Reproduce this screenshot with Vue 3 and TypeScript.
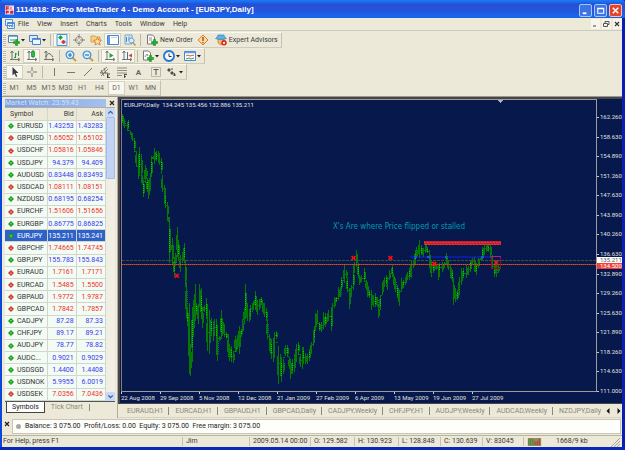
<script setup lang="ts">
interface Shape { d: string; f?: string; s?: string; w?: number }
interface Tool { icon?: string; label: string; text?: string; drop?: boolean; on?: boolean; sep?: boolean }
interface Quote { symbol: string; bid: string; ask: string; up: boolean }

const plus: Shape = { d: 'M7.5 5.5h2v2h2v2h-2v2h-2v-2h-2v-2h2z', f: '#1fae2c', s: '#0a7d18', w: 0.5 }
const axes: Shape = { d: 'M3 1v9M1.500 3L3 1l1.500 2M1 9.500h9M9 8l2 1.500-2 1.500', s: '#666', w: 0.9 }
const sheet: Shape = { d: 'M1.500 1h5l2 2v7h-7z', f: '#fff', s: '#777', w: 1 }

const icons: Record<string, Shape[]> = {
  newchart: [{ d: 'M.5 1.500h9v7h-9z', f: '#fff', s: '#4c86b8', w: 1 }, { d: 'M1 2.500h8', s: '#6cb8e0', w: 1 }, { d: 'M2 6h5', s: '#2c9a48', w: 1 }, plus],
  profiles: [{ d: 'M.5 1.500h8v6h-8z', f: '#d8ecfa', s: '#4a80c8', w: 1 }, { d: 'M3.500 4.500h8v6h-8z', f: '#eef7ff', s: '#4a80c8', w: 1 }, { d: 'M3.500 5.500h8', s: '#5a9be0', w: 1 }],
  market: [{ d: 'M1 .5h10v11h-10z', f: '#eaf6ff', s: '#4a94d8', w: 1 }, { d: 'M4.500 1.500l2 2-2 2-2-2z', f: '#2aa52c', s: '#2aa52c', w: 0.8 }, { d: 'M7.500 6l2 2-2 2-2-2z', f: '#e0352a', s: '#e0352a', w: 0.8 }],
  target: [{ d: 'M6 2.500a3.500 3.500 0 1 0 .01 0M6 0v5M6 7v5M0 6h5M7 6h5', s: '#7d7d76', w: 0.9 }],
  star: [{ d: 'M1 2h4l1 1h4v5h-9z', f: '#f6d48a', s: '#c78b32', w: 0.7 }, { d: 'M7.500 3.500l1.200 2.500 2.800.3-2 1.900.6 2.800-2.600-1.400-2.500 1.400.5-2.800-2-1.900 2.800-.3z', f: '#ffdc9c', s: '#c9772a', w: 0.8 }],
  terminal: [{ d: 'M.5 1.500h11v9h-11z', f: '#fff', s: '#4a86cf', w: 1 }, { d: 'M1 2h2v8h-2z', f: '#5c9be8' }, { d: 'M4 3.500h6', s: '#b7d4f4', w: 1 }],
  tester: [{ d: 'M1 1h7v9h-7z', f: '#dcecf7', s: '#7ba5c6', w: 1 }, { d: 'M2.500 3v5M5 2.500v4', s: '#4c8bb8', w: 1 }, { d: 'M7.500 4a2.500 2.500 0 1 0 .01 0', f: '#d5efff', s: '#5493c5', w: 1 }, { d: 'M9 8.500l2.500 3', s: '#c9913c', w: 1.500 }],
  order: [sheet, { d: 'M3 4h3M3 6h3', s: '#888', w: 1 }, plus],
  alert: [{ d: 'M6 1l5 5-5 5-5-5z', f: '#ffd9a0', s: '#d9822f', w: 1 }, { d: 'M6 3v4M6 8v1.200', s: '#8a4a14', w: 1.300 }],
  expert: [{ d: 'M3 5h6v4l-3 2-3-2z', f: '#f2b96b', s: '#b37330', w: 0.6 }, { d: 'M.5 4.500c1-1 2-1.500 2.500-3.500h6c.5 2 1.500 2.500 2.500 3.500-3 1.300-8 1.300-11 0z', f: '#59b4e8', s: '#2c7bb5', w: 0.6 }, { d: 'M9 6a2.800 2.800 0 1 0 .01 0', f: '#dc2a1c' }, { d: 'M8 8h2v1.800h-2z', f: '#fff' }],
  bars: [axes, { d: 'M6.500 3v5M5 7.500h1.500M6.500 4h1.500M9.500 1v5', s: '#25943a', w: 1 }],
  candles: [axes, { d: 'M7 0v8', s: '#128728', w: 1 }, { d: 'M5.500 1.500h3v5h-3z', f: '#27c03b', s: '#128728', w: 0.7 }],
  line: [axes, { d: 'M3 7c2-5 4-4 7 0', s: '#59625a', w: 1 }],
  zoomin: [{ d: 'M7.500 7.500l3.500 3.500', s: '#d39b38', w: 2 }, { d: 'M5 1a3.800 3.800 0 1 0 .01 0', f: '#d4efff', s: '#4191cd', w: 1.200 }, { d: 'M5 3v4M3 5h4', s: '#2778bd', w: 1.200 }],
  zoomout: [{ d: 'M7.500 7.500l3.500 3.500', s: '#d39b38', w: 2 }, { d: 'M5 1a3.800 3.800 0 1 0 .01 0', f: '#d4efff', s: '#4191cd', w: 1.200 }, { d: 'M3 5h4', s: '#2778bd', w: 1.200 }],
  scroll: [axes, { d: 'M5.500 3l4 2.500-4 2.500z', f: '#23a337' }],
  shift: [axes, { d: 'M6.500 2v7', s: '#3f72a0', w: 1 }, { d: 'M11 3.500l-3.500 2 3.500 2z', f: '#c84638' }],
  indic: [sheet, { d: 'M3 7l2-3 1 2', s: '#888', w: 1 }, plus],
  period: [{ d: 'M6 1a5 5 0 1 0 .01 0', f: '#f2faff', s: '#2b75d6', w: 1.800 }, { d: 'M6 3.500v3h2.500', s: '#333', w: 1 }],
  template: [{ d: 'M.5 1.500h11v9h-11z', f: '#fff', s: '#4a86cf', w: 1 }, { d: 'M1 2.500h10', s: '#5da1e8', w: 1.500 }, { d: 'M2 6l2-1 2 1 4-1', s: '#cf5a3a', w: 1 }, { d: 'M2 9l3-1 2 1 3-1', s: '#3c9b55', w: 1 }],
  cursor: [{ d: 'M3.500 1v8.500l2-2 1.500 3.500 1.300-.7-1.500-3.200h2.700z', f: '#3b3b3b' }],
  cross: [{ d: 'M6 1v4M6 7v4M1 6h4M7 6h4', s: '#77776f', w: 1 }],
  vline: [{ d: 'M6.500 2v8', s: '#77776f', w: 1 }],
  hline: [{ d: 'M2 6.500h8', s: '#77776f', w: 1 }],
  trend: [{ d: 'M2 10l8-8', s: '#77776f', w: 1 }],
  channel: [{ d: 'M1 7l7-6M2 10l7-7M2 4l3 6M5 2l2 6M1 7h8', s: '#66665f', w: 0.8 }, { d: 'M8 8h3M8 10h2M8 11.500h3M8.500 8v4', s: '#333', w: 0.8 }],
  fibo: [{ d: 'M1 2h10M1 4.500h10M1 7h10M1 9.500h5', s: '#77776f', w: 0.8 }, { d: 'M8 8.500h3M8.500 8.500v3.500M8 10.500h2', s: '#333', w: 0.8 }],
  label: [{ d: 'M1.500 1.500h9v9h-9z', s: '#a5a59c', w: 0.7 }, { d: 'M3.500 3.500h5M6 3.500v5.500', s: '#555', w: 1 }],
  arrows: [{ d: 'M3 2l2 2-2 2-2-2zM6 5l2 2-2 2-2-2z', f: '#4f4f49' }, { d: 'M7 9h3M8.500 7v3M5 3h2', s: '#4f4f49', w: 1 }],
}

const menus = ['File', 'View', 'Insert', 'Charts', 'Tools', 'Window', 'Help']

const toolbars: Tool[][] = [
  [
    { icon: 'newchart', label: 'New chart', drop: true }, { icon: 'profiles', label: 'Profiles', drop: true },
    { label: 's1', sep: true },
    { icon: 'market', label: 'Market Watch', on: true }, { icon: 'target', label: 'Data Window' },
    { icon: 'star', label: 'Navigator' }, { icon: 'terminal', label: 'Terminal', on: true },
    { icon: 'tester', label: 'Strategy Tester' }, { label: 's2', sep: true },
    { icon: 'order', label: 'New Order', text: 'New Order' }, { icon: 'alert', label: 'MetaEditor' },
    { icon: 'expert', label: 'Expert Advisors', text: 'Expert Advisors' },
  ],
  [
    { icon: 'bars', label: 'Bar Chart' }, { icon: 'candles', label: 'Candlesticks', on: true }, { icon: 'line', label: 'Line Chart' },
    { label: 's1', sep: true }, { icon: 'zoomin', label: 'Zoom In' }, { icon: 'zoomout', label: 'Zoom Out' },
    { label: 's2', sep: true }, { icon: 'scroll', label: 'Auto Scroll', on: true }, { icon: 'shift', label: 'Chart Shift', on: true },
    { label: 's3', sep: true }, { icon: 'indic', label: 'Indicators', drop: true },
    { icon: 'period', label: 'Periods', drop: true }, { icon: 'template', label: 'Templates', drop: true },
  ],
  [
    { icon: 'cursor', label: 'Cursor', on: true }, { icon: 'cross', label: 'Crosshair' }, { label: 's1', sep: true },
    { icon: 'vline', label: 'Vertical Line' }, { icon: 'hline', label: 'Horizontal Line' }, { icon: 'trend', label: 'Trendline' },
    { icon: 'channel', label: 'Channel' }, { icon: 'fibo', label: 'Fibonacci' }, { label: 'Text', text: 'A' },
    { icon: 'label', label: 'Text Label' }, { icon: 'arrows', label: 'Arrows', drop: true },
  ],
]
const periods = ['M1', 'M5', 'M15', 'M30', 'H1', 'H4', 'D1', 'W1', 'MN']

const q = (symbol: string, bid: string, ask: string, up: boolean): Quote => ({ symbol, bid, ask, up })
const quotes: Quote[] = [
  q('EURUSD', '1.43253', '1.43283', true), q('GBPUSD', '1.65052', '1.65102', false), q('USDCHF', '1.05816', '1.05846', false),
  q('USDJPY', '94.379', '94.409', true), q('AUDUSD', '0.83448', '0.83493', true), q('USDCAD', '1.08111', '1.08151', false),
  q('NZDUSD', '0.68195', '0.68254', true), q('EURCHF', '1.51606', '1.51656', false), q('EURGBP', '0.86775', '0.86825', true),
  q('EURJPY', '135.211', '135.241', true), q('GBPCHF', '1.74665', '1.74745', false), q('GBPJPY', '155.783', '155.843', true),
  q('EURAUD', '1.7161', '1.7171', false), q('EURCAD', '1.5485', '1.5500', false), q('GBPAUD', '1.9772', '1.9787', false),
  q('GBPCAD', '1.7842', '1.7857', false), q('CADJPY', '87.28', '87.33', true), q('CHFJPY', '89.17', '89.21', true),
  q('AUDJPY', '78.77', '78.82', true), q('AUDC...', '0.9021', '0.9029', true), q('USDSGD', '1.4400', '1.4408', true),
  q('USDNOK', '5.9955', '6.0019', true), q('USDSEK', '7.0356', '7.0436', false),
]

const prices = ['162.260', '158.630', '154.890', '151.260', '147.630', '143.890', '140.260', '136.630', '132.890', '129.260', '125.630', '121.890', '118.260', '114.630', '111.000']
const dates = ['22 Aug 2008', '29 Sep 2008', '5 Nov 2008', '12 Dec 2008', '21 Jan 2009', '27 Feb 2009', '6 Apr 2009', '13 May 2009', '19 Jun 2009', '27 Jul 2009']
const chartTabs = ['EURAUD,H1', 'EURCAD,H1', 'GBPAUD,H1', 'GBPCAD,Daily', 'CADJPY,Weekly', 'CHFJPY,H1', 'AUDJPY,Weekly', 'AUDCAD,Weekly', 'NZDJPY,Daily']
const status = ['Jim', '2009.05.14 00:00', 'O: 129.582', 'H: 130.923', 'L: 128.848', 'C: 130.639', 'V: 83045']

// x, high, low of each bar on the plot
const bars: number[][] = `122 113 122,124 118 127,127 121 130,128 119 128,130 130 134,132 132 140,134 137 150,136 150 165,138 165 179,139 146 173,141 153 178,142 175 185,143 180 197,145 164 183,146 167 178,147 178 192,148 180 199,150 173 191,151 155 177,153 155 158,154 147 163,156 150 160,158 150 158,159 155 164,161 157 172,162 175 192,164 185 197,165 192 208,167 202 217,168 217 222,169 217 263,171 245 250,172 238 265,174 257 277,175 253 266,177 227 257,178 240 260,180 255 272,182 252 263,184 243 263,185 260 287,186 282 318,187 308 327,189 303 375,190 345 377,192 307 363,193 300 338,195 284 322,196 303 315,198 304 325,199 284 307,201 288 320,202 307 329,204 305 312,206 298 320,207 315 352,209 310 355,211 318 337,213 322 342,214 320 337,216 320 343,217 335 362,219 337 342,221 310 340,222 318 337,224 325 338,226 333 340,228 335 358,229 345 362,231 347 363,233 352 364,235 337 353,236 340 353,238 332 348,239 327 355,241 330 338,242 320 335,244 308 325,245 284 320,247 303 322,249 315 323,250 305 320,252 303 312,254 300 305,255 291 310,257 300 315,259 299 310,261 297 305,262 300 312,264 303 317,266 308 322,267 320 340,269 335 352,271 340 360,273 347 363,274 333 355,276 332 340,278 347 385,280 355 373,281 358 383,283 360 375,285 346 357,287 346 357,289 358 370,290 360 380,292 360 375,294 355 373,296 345 363,298 343 355,300 355 368,302 348 370,303 348 363,305 354 365,307 355 365,309 350 362,311 343 355,313 332 347,314 327 343,315 313 332,317 310 325,319 323 332,321 323 333,323 312 330,325 313 328,326 317 325,328 310 322,331 310 332,332 303 317,334 297 308,336 297 302,338 287 300,340 287 297,341 277 290,344 265 283,346 270 278,347 277 292,349 288 309,351 285 297,353 270 290,354 262 273,356 250 267,358 263 278,360 275 285,362 275 282,365 268 282,367 280 290,368 282 297,370 290 298,372 290 310,374 295 307,376 293 307,378 297 307,379 305 319,381 295 310,383 282 295,385 277 287,387 275 285,388 277 290,390 270 280,393 265 277,394 273 285,396 278 292,398 285 298,400 290 306,402 278 292,404 280 288,406 277 285,408 272 280,410 268 280,412 260 278,414 260 268,416 250 265,417 247 258,420 240 258,422 245 255,424 248 257,426 242 253,428 247 253,430 250 268,432 260 277,434 262 273,437 265 270,439 265 280,440 263 272,443 262 272,445 262 268,447 253 265,449 260 270,451 265 278,453 270 282,454 278 305,456 288 302,458 290 300,460 277 295,462 268 285,464 268 278,467 265 278,469 266 275,471 260 272,473 258 265,475 257 272,477 263 275,479 258 268,482 257 260,483 247 260,485 245 255,487 243 252,489 245 252,491 243 258,493 255 268,495 265 277,497 260 277,499 265 273`
  .split(',').map((b) => b.split(' ').map(Number))

let wicks = ''
let bodies = ''
let bright = ''
let teal = ''
bars.forEach(([x, hi, lo], i) => {
  const len = lo - hi
  wicks += `M${x} ${hi}h1v${len}h-1z`
  const top = hi + Math.round(len * 0.25)
  const h = Math.max(2, Math.round(len * 0.5))
  bodies += `M${x - (i % 2)} ${top}h2v${h}h-2z`
  const next = bars[i + 1]
  if (next) {
    const y = Math.round(Math.max(hi, next[1]) + Math.min(lo, next[2])) / 2
    wicks += `M${x} ${Math.floor(y)}H${next[0]}v1H${x}z`
  }
  for (let y = top; y < top + h; y += 2) {
    if (i % 3 === 0) bright += `M${x} ${y}h1v1h-1z`
    else if (i % 5 === 1) teal += `M${x + 1} ${y}h1v1h-1z`
  }
})
const crosses = [[177, 276], [354, 258], [391, 258], [435, 264], [497, 263]]
const crossPath = crosses.map(([x, y]) => `M${x - 2} ${y - 2}l4 4m0-4l-4 4`).join('')
</script>

<template>
  <div class="window">
    <header class="title">
      <svg class="logo" viewBox="0 0 10 10"><path d="M0 0h10v10H0z" fill="#f3e9ec" /><path d="M1 1h3v1H2v1h2v1H2v1H1zM5 1l3 4M8 1L5 5M1 6h3v2H2v1H1zM6 6h3v3H6z" fill="#d8263a" stroke="#d8263a" stroke-width=".6" /></svg>
      <h1>1114818: FxPro MetaTrader 4 - Demo Account - [EURJPY,Daily]</h1>
      <button class="ctl" aria-label="Minimize"><svg viewBox="0 0 12 12"><path d="M3 9h4" stroke="#fff" stroke-width="2" /></svg></button>
      <button class="ctl" aria-label="Maximize"><svg viewBox="0 0 12 12"><path d="M3 3.500h6.500v5.500H3zM3 4h6.500" fill="none" stroke="#fff" stroke-width="1.200" /></svg></button>
      <button class="ctl close" aria-label="Close"><svg viewBox="0 0 12 12"><path d="M3 3l6 6M9 3L3 9" stroke="#fff" stroke-width="1.600" /></svg></button>
    </header>

    <nav class="menu">
      <svg class="doc" viewBox="0 0 10 10"><path d="M.5.5h7v6h-7zM2.500 3.500h7v6h-7z" fill="#e6f4ff" stroke="#4e8fd6" /><path d="M3 4.500h6M4 8l1.500-1.500L7 8l1.500-1" fill="none" stroke="#4e8fd6" /></svg>
      <button v-for="m in menus" :key="m">{{ m }}</button>
      <span class="spring"></span>
      <button class="mdi" aria-label="Minimize chart"><svg viewBox="0 0 8 8"><path d="M2 6h3" stroke="#444" /></svg></button>
      <button class="mdi" aria-label="Restore chart"><svg viewBox="0 0 8 8"><path d="M1.500 3.500h4v3h-4zM3 3V1.500h4v3H6" fill="none" stroke="#555" /></svg></button>
      <button class="mdi" aria-label="Close chart"><svg viewBox="0 0 8 8"><path d="M2 2l4 4M6 2L2 6" stroke="#333" stroke-width="1.200" /></svg></button>
    </nav>

    <section class="bars">
      <div v-for="(bar, b) in toolbars" :key="b" class="toolbar">
        <i class="grip"></i>
        <template v-for="t in bar" :key="t.label">
          <i v-if="t.sep" class="sep"></i>
          <button v-else :aria-label="t.label" :class="{ on: t.on, wide: t.text && t.icon, drop: t.drop }">
            <svg v-if="t.icon" class="ico" viewBox="0 0 12 12">
              <path v-for="(p, k) in icons[t.icon]" :key="k" :d="p.d" :fill="p.f || 'none'" :stroke="p.s || 'none'" :stroke-width="p.w" />
            </svg>
            <span v-if="t.text" :class="{ letter: !t.icon }">{{ t.text }}</span>
            <svg v-if="t.drop" class="caret" viewBox="0 0 4 3"><path d="M0 0h4L2 2.500z" fill="#222" /></svg>
          </button>
        </template>
      </div>
      <div class="toolbar periods">
        <i class="grip"></i>
        <button v-for="p in periods" :key="p" :class="{ on: p === 'D1' }">{{ p }}</button>
      </div>
    </section>

    <main class="work">
      <aside class="watch">
        <div class="watch-title"><h2>Market Watch: 23:59:43</h2><button aria-label="Close Market Watch"><svg viewBox="0 0 6 6"><path d="M1 1l4 4M5 1L1 5" stroke="#222" stroke-width="1.200" /></svg></button></div>
        <div class="list">
          <table>
            <thead><tr><th>Symbol</th><th>Bid</th><th>Ask</th></tr></thead>
            <tbody>
              <tr v-for="r in quotes" :key="r.symbol" :class="[r.up ? 'up' : 'down', { sel: r.symbol === 'EURJPY' }]">
                <td><svg class="dir" viewBox="0 0 6 6"><path d="M3 0l3 3-3 3-3-3z" :fill="r.up ? '#12a012' : '#d23a28'" /><path :d="r.up ? 'M3 2v2.500M2 3l1-1 1 1' : 'M3 1.500v2.500M2 3l1 1 1-1'" fill="none" stroke="#fff" stroke-width=".3" /></svg>{{ r.symbol }}</td>
                <td>{{ r.bid }}</td>
                <td>{{ r.ask }}</td>
              </tr>
            </tbody>
          </table>
          <div class="scroll">
            <button aria-label="Scroll up"><svg viewBox="0 0 8 8"><path d="M2 5l2-2 2 2" fill="none" stroke="#3c5d9c" stroke-width="1.200" /></svg></button>
            <i class="thumb"></i>
            <button aria-label="Scroll down"><svg viewBox="0 0 8 8"><path d="M2 3l2 2 2-2" fill="none" stroke="#3c5d9c" stroke-width="1.200" /></svg></button>
          </div>
        </div>
        <div class="watch-tabs"><button class="active">Symbols</button><button>Tick Chart</button><i class="bar"></i></div>
      </aside>

      <section class="right">
        <div class="chart">
          <div class="plot">
            <svg viewBox="122 99 475 293" preserveAspectRatio="none" shape-rendering="crispEdges">
              <path d="M411 256h82v2h-82z" fill="#0a1c9c" />
              <path :d="wicks" fill="#067806" />
              <path :d="bodies" fill="#067806" />
              <path :d="bright" fill="#0cc818" />
              <path :d="teal" fill="#12626e" />
              <path d="M415 256h3v2h-3zM428 256h3v2h-3zM446 256h2v2h-2zM482 256h3v2h-3z" fill="#1a5ae0" />
              <path d="M122 261h475" stroke="#3c5238" stroke-dasharray="3 1" />
              <path d="M122 264.500h475v1H122z" fill="#a8322a" />
              <path d="M122 265h475" stroke="#e04a20" stroke-dasharray="1 1" />
              <path d="M425 241h77v4h-77z" fill="#c81c30" />
              <path d="M425 242.500h77M426 244.500h76" stroke="#e83a28" stroke-dasharray="2 1" />
              <path d="M492.500 257v12h9v-12" fill="none" stroke="#8a1424" />
              <path d="M492 256.500h10" stroke="#c010a0" />
              <path :d="crossPath" stroke="#ff1010" stroke-width="1.500" shape-rendering="auto" />
              <path d="M498 99h6l-3 3z" fill="#a8b0b8" />
            </svg>
            <p class="info">EURJPY,Daily&nbsp; 134.245 135.456 132.886 135.211</p>
            <p class="note">X's Are where Price flipped or stalled</p>
          </div>
          <div class="prices">
            <span v-for="p in prices" :key="p">{{ p }}</span>
            <b class="tag bid">135.211</b>
            <b class="tag ask">134.500</b>
          </div>
          <div class="dates"><span v-for="d in dates" :key="d">{{ d }}</span></div>
        </div>
        <div class="chart-tabs">
          <button v-for="t in chartTabs" :key="t">{{ t }}</button>
          <span class="spring"></span>
          <button class="arrow" aria-label="Previous tabs"><svg viewBox="0 0 4 6"><path d="M3.500 0v6L.5 3z" fill="#111" /></svg></button>
          <button class="arrow" aria-label="Next tabs"><svg viewBox="0 0 4 6"><path d="M.5 0v6l3-3z" fill="#111" /></svg></button>
        </div>
      </section>
    </main>

    <section class="account">
      <button aria-label="Close Terminal"><svg viewBox="0 0 6 6"><path d="M1 1l4 4M5 1L1 5" stroke="#222" stroke-width="1.200" /></svg></button>
      <p><i class="dot"></i>Balance: 3 075.00&nbsp; Profit/Loss: 0.00&nbsp; Equity: 3 075.00&nbsp; Free margin: 3 075.00</p>
    </section>

    <footer class="status">
      <span>For Help, press F1</span>
      <span v-for="s in status" :key="s">{{ s }}</span>
      <span class="net">
        <svg class="signal" viewBox="0 0 15 9"><path d="M0 0h15v9H0z" fill="#9a8a62" /><path d="M1 1v7M3 1v7M5 1v7M7 2v6" stroke="#3d8a30" /><path d="M9 4v4M11 3v5M13 1v7" stroke="#c0301c" /></svg>
        1668/9 kb
      </span>
      <svg class="size" viewBox="0 0 9 9"><path d="M0 9l9-9M3 9l6-6M6 9l3-3" stroke="#a8a48e" /></svg>
    </footer>
  </div>
</template>

<style>
body { margin: 0; background: #0a28b8; }
</style>

<style scoped>
* { box-sizing: border-box; }
.window { display: flex; flex-direction: column; min-height: 100vh; padding: 0 3px 3px 2px; background: linear-gradient(90deg, #0a48dc, #0a48dc 2px, #ece9d8 2px, #ece9d8 calc(100% - 3px), #0a1eb4 calc(100% - 3px)); font-family: Roboto, "Liberation Sans", sans-serif; font-size: 7px; line-height: 9px; color: #3a3a38; position: relative; }
.window::after { content: ""; position: absolute; left: 0; right: 0; bottom: 0; height: 3px; background: #0a28b8; }
button { font: inherit; color: inherit; background: none; border: 0; padding: 0; margin: 0; white-space: nowrap; }
svg { display: block; }
h1, h2, p { margin: 0; font: inherit; white-space: nowrap; }
.spring { flex: 1; }

.title { display: flex; align-items: center; height: 18px; margin: 0 -3px 0 -2px; padding: 2px 3px 0 5px; gap: 2px; background: linear-gradient(#1a7cf4, #1b6cf0 2px, #2450d4 4px, #2455dc 11px, #1668ee 17px, #1460e0); color: #fff; border-radius: 3px 3px 0 0; }
.logo { width: 9px; height: 10px; }
.title h1 { flex: 1; font-family: "Liberation Sans", Arial, sans-serif; font-weight: bold; font-size: 8px; line-height: 12px; }
.ctl { width: 13px; height: 13px; border: 1px solid #a9c6f8; border-radius: 2px; background: #3a74e6; }
.ctl svg { width: 11px; height: 11px; }
.close { background: #e0452c; border-color: #f2c0b4; }

.menu { display: flex; align-items: center; height: 13px; padding-left: 3px; gap: 8px; border-bottom: 1px solid #c9ccc4; }
.doc { width: 10px; height: 10px; margin-right: -5px; }
.mdi { width: 9px; height: 10px; background: #f8f6ec; margin-left: -6px; }
.mdi svg { width: 8px; height: 8px; }

.bars { padding: 1px 0 0 1px; height: 66px; border-bottom: 1px solid #9a988c; }
.toolbar { display: flex; align-items: center; width: max-content; height: 16px; padding: 1px 1px 1px 0; border-right: 1px solid #c4c1b0; border-bottom: 1px solid #cfccbb; border-top: 1px solid #faf9f2; }
.grip { width: 3px; height: 11px; background: repeating-linear-gradient(#b8b5a2, #b8b5a2 1px, #f4f2e6 1px, #f4f2e6 2px); }
.toolbar button { display: flex; align-items: center; justify-content: center; width: 17px; height: 14px; gap: 1px; }
.toolbar .drop { width: 21px; }
.toolbar .wide { width: auto; padding: 0 2px 0 3px; gap: 2px; }
.toolbar .on { background: #f8f7f0; box-shadow: inset 0 0 0 1px #d3d0c0; }
.ico { width: 12px; height: 12px; flex: none; }
.caret { width: 4px; height: 3px; flex: none; }
.letter { font-weight: bold; font-size: 8px; color: #66665f; }
.sep { width: 1px; height: 12px; margin: 0 2px; background: #bbb8a6; }
.periods { color: #66655c; }

.work { display: flex; flex: 1; min-height: 0; }
.watch { display: flex; flex-direction: column; width: 116px; padding: 1px 2px 4px 3px; border-right: 1px solid #b0ad9c; }
.watch-title { display: flex; align-items: center; gap: 3px; height: 9px; }
.watch-title h2 { flex: 1; background: linear-gradient(90deg, #7a9ee0, #a4c0f0); color: #d6e2f4; height: 8px; line-height: 8px; }
.watch-title svg { width: 6px; height: 6px; }
.list { display: flex; flex: 1; background: #f2f8f0; border-top: 1px solid #b0ae9e; }
table { flex: 1; border-collapse: collapse; table-layout: fixed; background: #f3fbf5; }
th, td { padding: 0 2px 0 0; text-align: right; font-weight: normal; border-right: 1px solid #d2d6cc; border-bottom: 1px solid #d2d6cc; line-height: 8px; white-space: nowrap; overflow: hidden; }
th { background: #ece9d8; }
thead tr { height: 12px; }
th:first-child, td:first-child { width: 42px; text-align: left; }
th:first-child { padding-left: 5px; }
td:first-child { padding-left: 3px; }
.dir { display: inline-block; width: 6px; height: 6px; margin-right: 3px; vertical-align: middle; }
.up td { color: #3a3af0; }
.down td { color: #f03028; }
.up td:first-child, .down td:first-child { color: #333; }
.sel td, .sel td:first-child { background: #2f62c8; color: #fff; }
.scroll { display: flex; flex-direction: column; width: 9px; background: #f1efe4; }
.scroll button { width: 9px; height: 9px; background: #c8d8f8; border-radius: 1px; }
.scroll button svg { width: 9px; height: 9px; }
.scroll button:last-child { margin-top: auto; }
.thumb { height: 62px; background: #c3d3f6; border: 1px solid #a8bce4; border-radius: 1px; }
.watch-tabs { display: flex; align-items: flex-start; height: 13px; padding: 0 1px; color: #8c8a80; border-top: 1px solid #555; }
.watch-tabs button { height: 11px; padding: 0 6px; }
.watch-tabs .active { background: #fff; color: #222; border: 1px solid #444; border-top: 0; padding: 0 5px; }
.watch-tabs .bar { width: 1px; height: 7px; margin-top: 2px; background: #8c8a80; }

.right { display: flex; flex-direction: column; flex: 1; min-width: 0; }
.chart { display: grid; grid-template: 1fr 11px / 1fr 25px; flex: 1; background: #07184c; border: 2px solid #45454a; border-bottom-width: 1px; border-right-width: 0; padding-left: 1px; font-size: 6px; line-height: 8px; color: #e0e0e0; }
.plot { position: relative; border: 1px solid #a09c94; border-left-color: #907c70; min-height: 0; }
.plot svg { position: absolute; inset: 0; width: 100%; height: 100%; }
.info { position: absolute; left: 2px; top: 1px; }
.note { position: absolute; left: 44.500%; top: 42%; font-family: "DejaVu Sans Condensed", "DejaVu Sans", sans-serif; font-size: 8px; line-height: 10px; color: #009cac; }
.prices { position: relative; display: flex; flex-direction: column; justify-content: space-between; padding-top: 15px; margin-bottom: -2px; line-height: 6px; }
.prices span { position: relative; padding-left: 3px; }
.prices span::before { content: ""; position: absolute; left: 0; top: 3px; width: 2px; height: 1px; background: #ccc; }
.tag { position: absolute; left: 0; right: 0; height: 6px; padding-left: 3px; font-weight: normal; }
.bid { top: 53.600%; background: #fff; color: #555; }
.ask { top: 55.700%; background: #f04038; color: #fff; }
.dates { display: grid; grid-template-columns: repeat(10, 39px); }
.dates span { position: relative; white-space: nowrap; padding-top: 2px; }
.dates span::before { content: ""; position: absolute; left: 0; top: 0; width: 1px; height: 2px; background: #ccc; }
.chart-tabs { display: flex; align-items: center; gap: 1px; height: 14px; padding-left: 4px; color: #8a877c; border-bottom: 1px solid #d6d3c2; }
.chart-tabs button { padding: 0 5px; border-right: 1px solid #8a877c; line-height: 8px; }
.chart-tabs button:nth-last-child(4) { padding-right: 0; border: 0; }
.chart-tabs .arrow { border: 0; padding: 0 3px; }
.arrow svg { width: 4px; height: 6px; }

.account { display: flex; height: 17px; padding: 1px 1px 1px 2px; gap: 2px; }
.account button { align-self: flex-start; padding-top: 2px; }
.account svg { width: 6px; height: 6px; }
.account p { flex: 1; display: flex; align-items: center; padding-left: 3px; background: #fefefb; border: 1px solid #c9c6b5; color: #222; }
.dot { width: 5px; height: 5px; margin-right: 4px; border-radius: 50%; background: #a8a8a8; }

.status { display: grid; grid-template-columns: 1fr 67px 61px 44px 44px 42px 42px 41px 88px 11px; align-items: center; height: 12px; border-top: 1px solid #b8b5a4; padding-left: 1px; }
.status span { border-left: 1px solid #c4c1b0; padding-left: 3px; white-space: nowrap; }
.status span:first-child { border: 0; padding: 0; }
.net { display: flex; align-items: center; gap: 14px; }
.signal { width: 15px; height: 8px; }
.size { width: 9px; height: 9px; align-self: end; }
</style>
